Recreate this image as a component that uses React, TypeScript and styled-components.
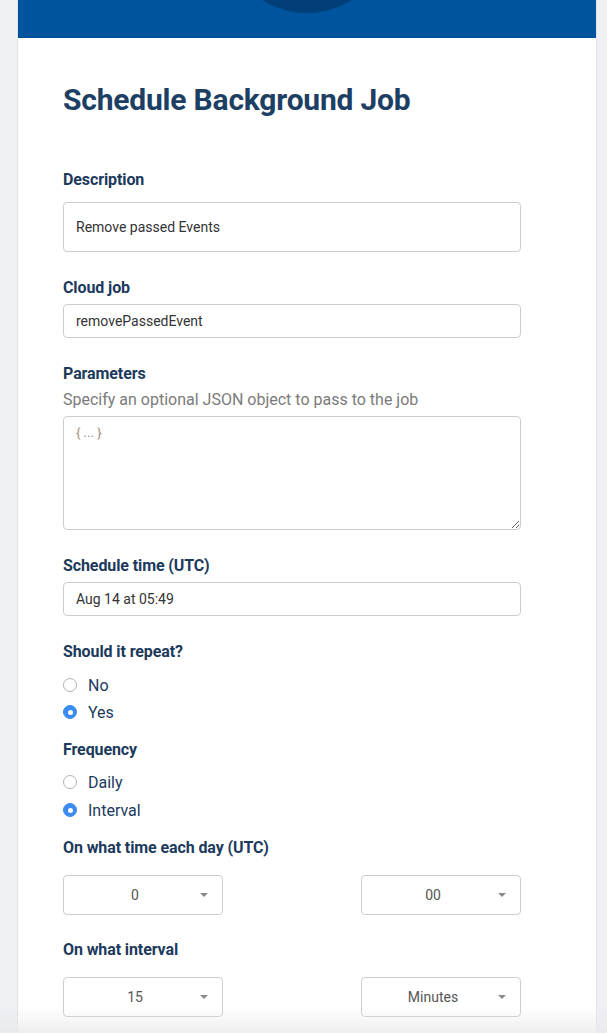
import styled, { createGlobalStyle } from "styled-components";

const GlobalStyle = createGlobalStyle`
	html, body {
		margin: 0;
		padding: 0;
		background: #eef0f4;
		font-family: Roboto, "Liberation Sans", sans-serif;
	}
	* {
		box-sizing: border-box;
	}
`;

const Card = styled.div`
	margin-left: 17px;
	width: 580px;
	min-height: 1100px;
	background: #ffffff;
	border-left: 1px solid #e2e4e8;
	border-right: 1px solid #e2e4e8;
`;

const Banner = styled.div`
	position: relative;
	height: 38px;
	background: #00549e;
	overflow: hidden;
	&::after {
		content: "";
		position: absolute;
		left: 50%;
		top: -155px;
		width: 168px;
		height: 168px;
		margin-left: -84px;
		border-radius: 50%;
		background: #023f78;
	}
`;

const Body = styled.div`
	padding: 42px 0 80px 45px;
	width: 503px;
`;

const Title = styled.h1`
	margin: 0 0 50px;
	font-size: 30px;
	line-height: 40px;
	font-weight: 700;
	color: #1d3f63;
	letter-spacing: -0.2px;
`;

const Label = styled.div<{ $gap?: number; $top?: number }>`
	margin-top: ${(p) => p.$top ?? 0}px;
	margin-bottom: ${(p) => p.$gap ?? 6}px;
	font-size: 16px;
	line-height: 20px;
	font-weight: 700;
	color: #1c3a5c;
	letter-spacing: -0.1px;
`;

const Help = styled.div`
	margin: 2px 0 6px;
	font-size: 16px;
	line-height: 20px;
	color: #7b7b7b;
`;

const TextInput = styled.input<{ $tall?: boolean }>`
	display: block;
	width: 458px;
	height: ${(p) => (p.$tall ? 50 : 34)}px;
	padding: 0 12px;
	border: 1px solid #cdcdcd;
	border-radius: 4px;
	font-family: Roboto, "Liberation Sans", sans-serif;
	font-size: 14px;
	color: #333;
	background: #fff;
	outline: none;
`;

const TextArea = styled.textarea`
	display: block;
	width: 458px;
	height: 114px;
	padding: 8px 12px;
	border: 1px solid #cdcdcd;
	border-radius: 4px;
	font-family: Roboto, "Liberation Sans", sans-serif;
	font-size: 13px;
	color: #333;
	outline: none;
	&::placeholder {
		color: #a38f7f;
	}
`;

const RadioList = styled.div<{ $gap?: number; $top?: number; $spacing?: number }>`
	display: flex;
	flex-direction: column;
	gap: ${(p) => p.$spacing ?? 7}px;
	margin-top: ${(p) => p.$top ?? 14}px;
	margin-bottom: ${(p) => p.$gap ?? 0}px;
`;

const RadioRow = styled.label`
	display: flex;
	align-items: center;
	gap: 11px;
	height: 20px;
	font-size: 16px;
	color: #1c3a5c;
`;

const Dot = styled.span<{ $on?: boolean }>`
	position: relative;
	width: 14px;
	height: 14px;
	border-radius: 50%;
	border: 1px solid ${(p) => (p.$on ? "#3a8cf0" : "#b3b3b3")};
	background: ${(p) => (p.$on ? "#3a8cf0" : "#fff")};
	&::after {
		content: "";
		display: ${(p) => (p.$on ? "block" : "none")};
		position: absolute;
		left: 50%;
		top: 50%;
		width: 5px;
		height: 5px;
		margin: -2.5px 0 0 -2.5px;
		border-radius: 50%;
		background: #fff;
	}
`;

const SelectRow = styled.div<{ $gap?: number }>`
	display: flex;
	justify-content: space-between;
	width: 458px;
	margin-bottom: ${(p) => p.$gap ?? 0}px;
`;

const Select = styled.div`
	display: flex;
	align-items: center;
	width: 160px;
	height: 40px;
	padding: 0 14px 0 0;
	border: 1px solid #cdcdcd;
	border-radius: 4px;
	font-size: 14px;
	color: #555;
`;

const SelectValue = styled.span`
	flex: 1;
	text-align: center;
	padding-left: 6px;
`;

const Caret = styled.span`
	width: 0;
	height: 0;
	border-left: 4px solid transparent;
	border-right: 4px solid transparent;
	border-top: 4px solid #8a8a8a;
`;

const Fade = styled.div`
	position: fixed;
	left: 0;
	right: 0;
	bottom: 0;
	height: 26px;
	pointer-events: none;
	background: linear-gradient(rgba(235, 235, 235, 0), rgba(232, 232, 234, 0.7));
`;

const Radio = ({ label, on }: { label: string; on?: boolean }) => (
	<RadioRow>
		<Dot $on={on} />
		{label}
	</RadioRow>
);

const Dropdown = ({ value }: { value: string }) => (
	<Select>
		<SelectValue>{value}</SelectValue>
		<Caret />
	</Select>
);

const App = () => {
	return (
		<>
			<GlobalStyle />
			<Card>
				<Banner />
				<Body>
					<Title>Schedule Background Job</Title>

					<Label $gap={12}>Description</Label>
					<TextInput $tall readOnly value="Remove passed Events" />

					<Label $top={26}>Cloud job</Label>
					<TextInput readOnly value="removePassedEvent" />

					<Label $top={26}>Parameters</Label>
					<Help>Specify an optional JSON object to pass to the job</Help>
					<TextArea placeholder="{ ... }" />

					<Label $top={26}>Schedule time (UTC)</Label>
					<TextInput readOnly value="Aug 14 at 05:49" />

					<Label $top={26} $gap={0}>Should it repeat?</Label>
					<RadioList $top={13} $gap={18}>
						<Radio label="No" />
						<Radio label="Yes" on />
					</RadioList>

					<Label $gap={0}>Frequency</Label>
					<RadioList $top={12} $spacing={8} $gap={18}>
						<Radio label="Daily" />
						<Radio label="Interval" on />
					</RadioList>

					<Label $gap={17}>On what time each day (UTC)</Label>
					<SelectRow $gap={25}>
						<Dropdown value="0" />
						<Dropdown value="00" />
					</SelectRow>

					<Label $gap={17}>On what interval</Label>
					<SelectRow>
						<Dropdown value="15" />
						<Dropdown value="Minutes" />
					</SelectRow>
				</Body>
			</Card>
			<Fade />
		</>
	);
};

export default App;
